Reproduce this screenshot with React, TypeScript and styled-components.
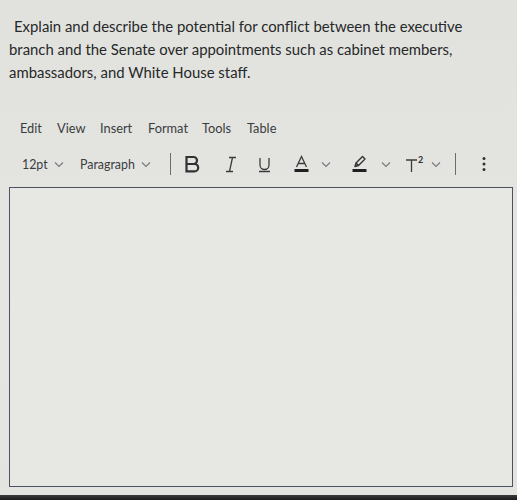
import React from "react";
import styled, { createGlobalStyle } from "styled-components";

const Global = createGlobalStyle`
  html, body { margin: 0; padding: 0; background: #e3e4e0; }
  body { font-family: Lato, "Noto Sans", sans-serif; color: #2f3133; }
`;

const Page = styled.div`
  width: 517px;
  height: 500px;
  background: linear-gradient(180deg, #e1e2de 0%, #e5e6e2 60%, #e3e4e0 100%);
  display: flex;
  flex-direction: column;
  overflow: hidden;
`;

const Question = styled.p`
  margin: 0;
  padding: 15px 20px 0 9px;
  font-size: 14.9px;
  line-height: 23px;
  color: #262829;
  text-indent: 5px;
`;

const MenuBar = styled.div`
  display: flex;
  padding: 35px 0 0 20px;
  font-size: 12.8px;
  color: #3a3c3e;
  line-height: 18px;
`;

const MenuItem = styled.span<{ w: number }>`
  width: ${(p) => p.w}px;
`;

const Toolbar = styled.div`
  display: flex;
  align-items: center;
  height: 30px;
  margin-top: 12px;
  padding-left: 22px;
  color: #3a3c3e;
`;

const Select = styled.div<{ w: number }>`
  display: flex;
  align-items: center;
  gap: 6px;
  width: ${(p) => p.w}px;
  font-size: 12.4px;
`;

const Sep = styled.div<{ mr: number }>`
  width: 1px;
  height: 22px;
  background: #6a6c6e;
  margin-right: ${(p) => p.mr}px;
`;

const Btn = styled.div<{ w: number; gap?: number }>`
  width: ${(p) => p.w}px;
  display: flex;
  align-items: center;
  gap: ${(p) => p.gap ?? 8}px;
`;

const Editor = styled.div`
  margin: 8px 4px 0 9px;
  height: 298px;
  border: 1.5px solid #4c5262;
  background: #e7e8e4;
`;

const BottomBar = styled.div`
  margin-top: 8px;
  flex: 1;
  background: linear-gradient(180deg, #3a3b3c, #1c1c1c);
`;

const Chevron = () => (
  <svg width="10" height="7" viewBox="0 0 10 7" fill="none" stroke="#7a7c80" strokeWidth="1.2">
    <path d="M1 1.5 L5 5.5 L9 1.5" />
  </svg>
);

export default function App() {
  return (
    <>
      <Global />
      <Page>
        <Question>
          Explain and describe the potential for conflict between the executive
          branch and the Senate over appointments such as cabinet members,
          ambassadors, and White House staff.
        </Question>
        <MenuBar>
          <MenuItem w={37}>Edit</MenuItem>
          <MenuItem w={43}>View</MenuItem>
          <MenuItem w={48}>Insert</MenuItem>
          <MenuItem w={54}>Format</MenuItem>
          <MenuItem w={45}>Tools</MenuItem>
          <MenuItem w={40}>Table</MenuItem>
        </MenuBar>
        <Toolbar>
          <Select w={58}>
            12pt <Chevron />
          </Select>
          <Select w={90}>
            Paragraph <Chevron />
          </Select>
          <Sep mr={13} />
          <Btn w={41}>
            <svg width="17" height="18" viewBox="0 0 17 18" fill="none" stroke="#2f3133" strokeWidth="2.2">
              <path d="M2.5 2 H9.5 a3.5 3.5 0 0 1 0 7 H2.5 Z M2.5 9 H10.5 a3.7 3.7 0 0 1 0 7.4 H2.5 Z" />
            </svg>
          </Btn>
          <Btn w={33}>
            <svg width="12" height="17" viewBox="0 0 12 17" fill="none" stroke="#3a3c3e" strokeWidth="1.3">
              <path d="M4 1.5 H11 M1 15.5 H8 M7.5 1.5 L4.5 15.5" />
            </svg>
          </Btn>
          <Btn w={36}>
            <svg width="13" height="17" viewBox="0 0 13 17" fill="none" stroke="#3a3c3e" strokeWidth="1.3">
              <path d="M2 2 V9 a4.5 4.5 0 0 0 9 0 V2 M1 15.5 H12" />
            </svg>
          </Btn>
          <Btn w={58} gap={12}>
            <svg width="15" height="18" viewBox="0 0 15 18" fill="none">
              <path d="M2.5 12 L7.5 1.5 L12.5 12 M4.2 8.5 H10.8" stroke="#3a3c3e" strokeWidth="1.3" />
              <rect x="0.5" y="14" width="14" height="3" fill="#1f2022" />
            </svg>
            <Chevron />
          </Btn>
          <Btn w={53} gap={14}>
            <svg width="15" height="18" viewBox="0 0 15 18" fill="none">
              <path d="M3 11.5 L4 8 L10.5 1.5 L13 4 L6.5 10.5 Z M4 8 L6.5 10.5" stroke="#2f3133" strokeWidth="1.4" strokeLinejoin="round" />
              <rect x="0.5" y="14" width="14" height="3" fill="#1f2022" />
            </svg>
            <Chevron />
          </Btn>
          <Btn w={50} gap={5}>
            <svg width="21" height="18" viewBox="0 0 21 18" fill="none">
              <path d="M1 5 H12 M6.5 5 V17" stroke="#3a3c3e" strokeWidth="1.3" />
              <text x="13" y="8" fontSize="9" fontFamily="Lato, sans-serif" fontWeight="700" fill="#2f3133">2</text>
            </svg>
            <Chevron />
          </Btn>
          <Sep mr={26} />
          <Btn w={10}>
            <svg width="4" height="16" viewBox="0 0 4 16" fill="#2f3133">
              <circle cx="2" cy="2.5" r="1.5" />
              <circle cx="2" cy="8" r="1.5" />
              <circle cx="2" cy="13.5" r="1.5" />
            </svg>
          </Btn>
        </Toolbar>
        <Editor />
        <BottomBar />
      </Page>
    </>
  );
}
